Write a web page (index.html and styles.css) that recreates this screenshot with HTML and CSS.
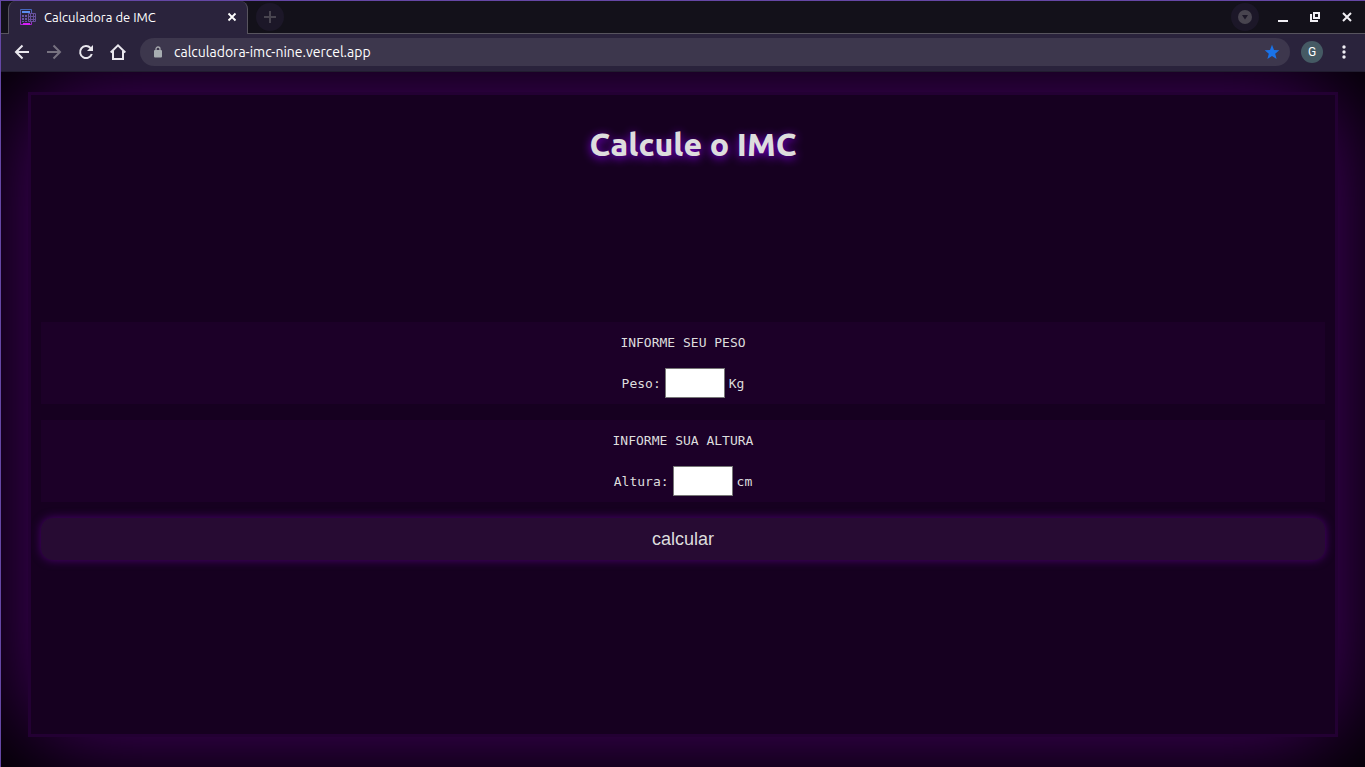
FILE: index.html
```html
<!DOCTYPE html>
<html lang="pt-BR">
<head>
<meta charset="utf-8">
<title>Calculadora de IMC</title>
<link rel="stylesheet" href="styles.css">
</head>
<body>
<div class="browser">
  <header class="tabstrip">
    <div class="tab">
      <svg class="favicon" viewBox="0 0 16 16" width="16" height="16" aria-hidden="true" fill="none">
        <defs><linearGradient id="calc" x1="0" y1="0" x2="0" y2="1"><stop offset="0" stop-color="#4668bd"/><stop offset=".5" stop-color="#69499f"/><stop offset="1" stop-color="#a826d0"/></linearGradient></defs>
        <path stroke="url(#calc)" d="M.5.5h11v15H.5z"/>
        <path fill="#5b8df0" d="M2 2h8v2H2z"/>
        <path fill="#6655a8" d="M2 6h2v2H2zM5 6h2v2H5zM2 9h2v2H2zM5 9h2v2H5zM2 12h2v1H2zM5 12h2v1H5z"/>
        <path fill="#d31df5" d="M3 14h7v2H3z"/>
        <path fill="#2a233c" stroke="#67509b" d="M8.500 4.500h7v8h-7z"/>
        <path stroke="#67509b" d="M8 7.500h8M8 10.500h8M10.500 4v9M13.500 4v9"/>
      </svg>
      <span class="tab-title">Calculadora de IMC</span>
      <button class="tab-close" aria-label="Fechar guia"><svg viewBox="0 0 10 10" width="10" height="10"><path d="M1.500 1.500l7 7M8.500 1.500l-7 7" stroke="#fff" stroke-width="1.800"/></svg></button>
    </div>
    <button class="round" aria-label="Nova guia"><svg viewBox="0 0 12 12" width="12" height="12"><path d="M6 0v12M0 6h12" stroke="#48444f" stroke-width="2"/></svg></button>
    <div class="window-controls">
      <button class="round" aria-label="Pesquisar guias"><svg viewBox="0 0 14 14" width="14" height="14"><circle cx="7" cy="7" r="7" fill="#48444f"/><path d="M4 5h6L7 9.500z" fill="#1c1728"/></svg></button>
      <button class="control" aria-label="Minimizar"><svg viewBox="0 0 10 10" width="10" height="10"><path d="M0 8h10v2H0z" fill="#f1eff5"/></svg></button>
      <button class="control" aria-label="Restaurar"><svg viewBox="0 0 10 10" width="10" height="10" fill="none" stroke="#f1eff5" stroke-width="2"><path d="M4 1h5v5H4zM1 2v7h7"/></svg></button>
      <button class="control" aria-label="Fechar"><svg viewBox="0 0 10 10" width="10" height="10"><path d="M1 1l8 8M9 1L1 9" stroke="#f1eff5" stroke-width="2"/></svg></button>
    </div>
  </header>
  <nav class="toolbar">
    <button class="nav-button" aria-label="Voltar"><svg viewBox="0 0 16 16" width="16" height="16" fill="none" stroke="#e9e7ee" stroke-width="2"><path d="M15 8H2.500M8.500 1.500L2 8l6.500 6.500"/></svg></button>
    <button class="nav-button" aria-label="Avançar"><svg viewBox="0 0 16 16" width="16" height="16" fill="none" stroke="#777280" stroke-width="2"><path d="M1 8h12.500M7.500 1.500L14 8l-6.500 6.500"/></svg></button>
    <button class="nav-button" aria-label="Recarregar"><svg viewBox="0 0 16 16" width="16" height="16" fill="none"><path d="M13.800 10A6 6 0 1 1 12.500 4" stroke="#e9e7ee" stroke-width="2"/><path d="M15 1v6H9z" fill="#e9e7ee"/></svg></button>
    <button class="nav-button" aria-label="Página inicial"><svg viewBox="0 0 16 16" width="16" height="16" fill="none" stroke="#e9e7ee" stroke-width="2"><path d="M.7 8.500L8 1.400l7.300 7.100M3 7v8h10V7"/></svg></button>
    <div class="address">
      <svg viewBox="0 0 8 12" width="8" height="12" aria-hidden="true"><path d="M2 5V3a2 2 0 0 1 4 0v2" fill="none" stroke="#a7a9ae" stroke-width="1.300"/><rect y="4" width="8" height="7.500" rx="1" fill="#a7adb1"/></svg>
      <input class="url" aria-label="Endereço" value="calculadora-imc-nine.vercel.app">
      <button class="bookmark" aria-label="Favorito"><svg viewBox="0 0 16 16" width="16" height="16"><path d="M8 .8l2 5.100 5.300.3-4.100 3.500 1.400 5.300L8 12l-4.600 3 1.400-5.300L.7 6.200 6 5.900z" fill="#1a73e8"/></svg></button>
    </div>
    <button class="avatar" aria-label="Perfil">G</button>
    <button class="more" aria-label="Menu"><svg viewBox="0 0 4 14" width="4" height="14" fill="#f0eef4"><circle cx="2" cy="2" r="1.700"/><circle cx="2" cy="7" r="1.700"/><circle cx="2" cy="12" r="1.700"/></svg></button>
  </nav>
  <main class="page">
    <section class="card">
      <h1 class="heading">Calcule o IMC</h1>
      <form class="form">
        <div class="field">
          <p class="prompt">INFORME SEU PESO</p>
          <div class="entry"><label for="peso">Peso:</label><input class="number" id="peso" type="text" inputmode="decimal"><span>Kg</span></div>
        </div>
        <div class="field">
          <p class="prompt">INFORME SUA ALTURA</p>
          <div class="entry"><label for="altura">Altura:</label><input class="number" id="altura" type="text" inputmode="decimal"><span>cm</span></div>
        </div>
        <button class="submit" type="button">calcular</button>
      </form>
    </section>
  </main>
</div>
</body>
</html>
```
FILE: styles.css
```css
* { box-sizing: border-box; }

body {
  margin: 0;
  background: #000;
  font-family: Ubuntu, "Noto Sans", sans-serif;
}

button {
  display: flex;
  align-items: center;
  justify-content: center;
  padding: 0;
  border: 0;
  background: none;
  color: inherit;
}

.browser {
  display: flex;
  flex-direction: column;
  min-height: 100vh;
  border-top: 1px solid #6547a5;
  border-left: 1px solid #6547a5;
}

.tabstrip {
  display: flex;
  align-items: center;
  gap: 8px;
  height: 33px;
  padding: 0 0 1px 7px;
  background: #13111a;
  box-shadow: inset 0 -1px #57545e;
}

.tab {
  display: flex;
  align-items: center;
  align-self: stretch;
  width: 240px;
  margin-bottom: -1px;
  padding: 0 10px 2px 11px;
  border: 1px solid #57545e;
  border-width: 0 1px;
  border-radius: 8px 8px 0 0;
  background: #2a233c;
  color: #fff;
  font-size: 13px;
}

.tab-title { flex: 1; margin-left: 8px; line-height: 20px; white-space: nowrap; }

.round {
  width: 28px;
  height: 28px;
  border-radius: 50%;
  background: #1c1728;
}

.window-controls {
  display: flex;
  align-items: center;
  gap: 22px;
  margin-left: auto;
  padding-right: 13px;
}

.window-controls .round { margin-right: -3px; }

.toolbar {
  display: flex;
  align-items: center;
  gap: 16px;
  height: 38px;
  padding: 0 19px 2px 13px;
  border-bottom: 1px solid #211c2f;
  background: #2a233c;
}

.address {
  display: flex;
  flex: 1;
  align-items: center;
  gap: 12px;
  height: 28px;
  margin: 0 -5px 0 -2px;
  padding: 0 10px 0 14px;
  border-radius: 14px;
  background: #3d374d;
}

.url {
  flex: 1;
  min-width: 0;
  padding: 0;
  border: 0;
  outline: 0;
  background: none;
  color: #fff;
  font-family: inherit;
  font-size: 14px;
}

.avatar {
  width: 22px;
  height: 22px;
  border-radius: 50%;
  background: #455a64;
  color: #fff;
  font-family: Roboto, sans-serif;
  font-size: 12px;
}

.more { margin-left: 3px; }

.page {
  display: flex;
  flex: 1;
  padding: 20px 27px 30px;
  overflow: hidden;
  background: #000;
}

.card {
  display: flex;
  flex: 1;
  flex-direction: column;
  padding: 25px 10px;
  border: 3px solid #230033;
  background: #160020;
  box-shadow: 0 0 100px #4e0070;
}

.heading {
  margin: 0;
  padding-left: 20px;
  color: #ddd;
  font-size: 32px;
  font-weight: 800;
  line-height: 48px;
  text-align: center;
  text-shadow: 0 2px 10px #8000e0;
}

.form {
  display: flex;
  flex-direction: column;
  gap: 16px;
  margin-top: 154px;
  color: #ddd;
  font-family: "DejaVu Sans Mono", monospace;
  font-size: 13px;
}

.field { padding: 13px 0 6px; background: #1c0028; }

.prompt { margin: 0 0 17px; line-height: 16px; text-align: center; }

.entry { display: flex; align-items: center; justify-content: center; gap: 4px; }

.number {
  width: 60px;
  height: 30px;
  border: 1px solid #767676;
  background: #fff;
}

.submit {
  height: 42px;
  border-radius: 12px;
  background: #270b33;
  box-shadow: 0 0 10px #4b0070;
  color: #ddd;
  font-family: "Liberation Sans", sans-serif;
  font-size: 18px;
}
```
